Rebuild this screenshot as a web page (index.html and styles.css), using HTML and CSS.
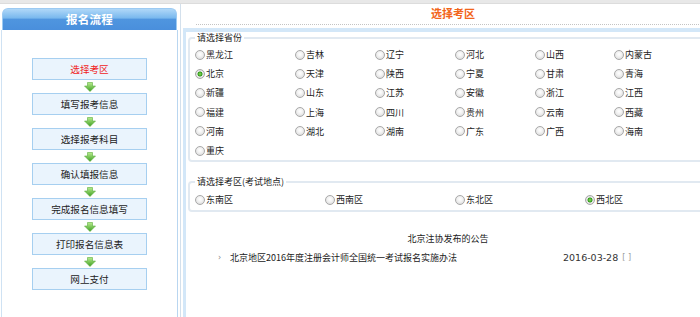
FILE: index.html
```html
<!DOCTYPE html>
<html lang="zh-CN">
<head>
<meta charset="utf-8">
<title>选择考区</title>
<link rel="stylesheet" href="styles.css">
</head>
<body>
<div class="topbar"></div>
<div class="page">
  <aside class="sidebar">
    <div class="side-head">报名流程</div>
    <div class="side-body">
      <div class="step current">选择考区</div>
      <div class="arrow"><svg width="12" height="10" viewBox="0 0 12 10"><defs><linearGradient id="ag" x1="0" y1="0" x2="0" y2="1"><stop offset="0" stop-color="#b8ec8e"/><stop offset="1" stop-color="#3d9e22"/></linearGradient></defs><path d="M3.5 0.5H8.5V4H11.5L6 9.5L0.5 4H3.5Z" fill="url(#ag)" stroke="#5cae3c" stroke-width="0.6"/></svg></div>
      <div class="step">填写报考信息</div>
      <div class="arrow"><svg width="12" height="10" viewBox="0 0 12 10"><path d="M3.5 0.5H8.5V4H11.5L6 9.5L0.5 4H3.5Z" fill="url(#ag)" stroke="#5cae3c" stroke-width="0.6"/></svg></div>
      <div class="step">选择报考科目</div>
      <div class="arrow"><svg width="12" height="10" viewBox="0 0 12 10"><path d="M3.5 0.5H8.5V4H11.5L6 9.5L0.5 4H3.5Z" fill="url(#ag)" stroke="#5cae3c" stroke-width="0.6"/></svg></div>
      <div class="step">确认填报信息</div>
      <div class="arrow"><svg width="12" height="10" viewBox="0 0 12 10"><path d="M3.5 0.5H8.5V4H11.5L6 9.5L0.5 4H3.5Z" fill="url(#ag)" stroke="#5cae3c" stroke-width="0.6"/></svg></div>
      <div class="step">完成报名信息填写</div>
      <div class="arrow"><svg width="12" height="10" viewBox="0 0 12 10"><path d="M3.5 0.5H8.5V4H11.5L6 9.5L0.5 4H3.5Z" fill="url(#ag)" stroke="#5cae3c" stroke-width="0.6"/></svg></div>
      <div class="step">打印报名信息表</div>
      <div class="arrow"><svg width="12" height="10" viewBox="0 0 12 10"><path d="M3.5 0.5H8.5V4H11.5L6 9.5L0.5 4H3.5Z" fill="url(#ag)" stroke="#5cae3c" stroke-width="0.6"/></svg></div>
      <div class="step">网上支付</div>
    </div>
  </aside>
  <main class="panel">
    <div class="panel-title"><span>选择考区</span></div>
    <div class="box">
      <fieldset class="group">
        <legend>请选择省份</legend>
        <div class="grid prov">
          <label><input type="radio" name="p">黑龙江</label>
          <label><input type="radio" name="p">吉林</label>
          <label><input type="radio" name="p">辽宁</label>
          <label><input type="radio" name="p">河北</label>
          <label><input type="radio" name="p">山西</label>
          <label><input type="radio" name="p">内蒙古</label>
          <label><input type="radio" name="p" checked>北京</label>
          <label><input type="radio" name="p">天津</label>
          <label><input type="radio" name="p">陕西</label>
          <label><input type="radio" name="p">宁夏</label>
          <label><input type="radio" name="p">甘肃</label>
          <label><input type="radio" name="p">青海</label>
          <label><input type="radio" name="p">新疆</label>
          <label><input type="radio" name="p">山东</label>
          <label><input type="radio" name="p">江苏</label>
          <label><input type="radio" name="p">安徽</label>
          <label><input type="radio" name="p">浙江</label>
          <label><input type="radio" name="p">江西</label>
          <label><input type="radio" name="p">福建</label>
          <label><input type="radio" name="p">上海</label>
          <label><input type="radio" name="p">四川</label>
          <label><input type="radio" name="p">贵州</label>
          <label><input type="radio" name="p">云南</label>
          <label><input type="radio" name="p">西藏</label>
          <label><input type="radio" name="p">河南</label>
          <label><input type="radio" name="p">湖北</label>
          <label><input type="radio" name="p">湖南</label>
          <label><input type="radio" name="p">广东</label>
          <label><input type="radio" name="p">广西</label>
          <label><input type="radio" name="p">海南</label>
          <label><input type="radio" name="p">重庆</label>
        </div>
      </fieldset>
      <fieldset class="group zones">
        <legend>请选择考区(考试地点)</legend>
        <div class="grid zone">
          <label><input type="radio" name="z">东南区</label>
          <label><input type="radio" name="z">西南区</label>
          <label><input type="radio" name="z">东北区</label>
          <label><input type="radio" name="z" checked>西北区</label>
        </div>
      </fieldset>
      <div class="notice">
        <div class="notice-head">北京注协发布的公告</div>
        <div class="notice-row">
          <span class="bullet">›</span>
          <span class="n-title">北京地区2016年度注册会计师全国统一考试报名实施办法</span>
          <span class="n-date">2016-03-28</span>
          <span class="n-br">[ ]</span>
        </div>
      </div>
    </div>
  </main>
</div>
</body>
</html>
```
FILE: styles.css
```css
html, body {
  margin: 0;
  padding: 0;
  overflow: hidden;
  background: #fff;
}
body {
  font-family: "Noto Sans CJK SC", "Noto Sans", sans-serif;
  font-size: 9px;
  color: #222;
  height: 100vh;
}
.topbar {
  height: 3px;
  background: #e8e8e8;
  border-bottom: 1px solid #dcdcdc;
}
.page {
  display: flex;
  height: calc(100vh - 4px);
  overflow: hidden;
}
.sidebar {
  width: 178px;
  flex: none;
  display: flex;
  flex-direction: column;
}
.side-head {
  margin: 4px 0 0 2px;
  width: 175px;
  height: 22px;
  box-sizing: border-box;
  border-radius: 6px 6px 0 0;
  border: 1px solid #9ccaf2;
  border-bottom: none;
  background: linear-gradient(#b0d8f8 0%, #7ab9ee 42%, #4f95df 50%, #4a8fdc 100%);
  color: #fff;
  font-weight: bold;
  font-size: 11.5px;
  line-height: 21px;
  text-align: center;
  letter-spacing: 0.3px;
}
.side-body {
  flex: 1;
  margin-left: 1px;
  width: 177px;
  box-sizing: border-box;
  border-left: 1px solid #cfe2f3;
  border-right: 1px solid #b9d6f0;
  padding-top: 28px;
  display: flex;
  flex-direction: column;
  align-items: center;
}
.step {
  width: 115px;
  height: 22px;
  box-sizing: border-box;
  border: 1px solid #a6cff0;
  background: #eaf4fd;
  font-size: 9.6px;
  line-height: 20px;
  text-align: center;
  color: #222;
}
.step.current {
  color: #f01c1c;
}
.arrow {
  height: 13px;
  display: flex;
  justify-content: center;
  padding-top: 2px;
  box-sizing: border-box;
}
.arrow svg {
  display: block;
}
.panel {
  margin-left: 2px;
  width: 536px;
  flex: none;
  border-left: 1px solid #d3e0ec;
  display: flex;
  flex-direction: column;
}
.panel-title {
  margin-left: 15px;
  padding-right: 7px;
  height: 20px;
  flex: none;
  border-bottom: 1px dotted #c4c4c4;
  text-align: center;
  color: #f2651a;
  font-size: 11px;
  font-weight: bold;
  line-height: 18px;
}
.box {
  flex: 1;
  margin: 3px 0 0 2px;
  border-top: 4px solid #d3e7f8;
  border-left: 3px solid #d3e7f8;
}
.group {
  margin: 0 5px 0 2px;
  border: 2px solid #e1e9f1;
  border-radius: 4px;
  padding: 2px 0 0 5px;
}
.group legend {
  padding: 0 2px;
  line-height: 11px;
  font-size: 9px;
  color: #222;
}
.zones {
  margin-top: 14px;
  padding-top: 3px;
  padding-bottom: 1px;
}
.grid {
  display: grid;
  grid-auto-rows: 19.2px;
}
.prov {
  grid-template-columns: 100px 80px 80px 80px 79px 80px;
}
.zone {
  grid-template-columns: 130px 130px 130px 130px;
}
.grid label {
  display: flex;
  align-items: center;
  white-space: nowrap;
}
.grid input {
  appearance: none;
  -webkit-appearance: none;
  width: 10px;
  height: 10px;
  margin: 0 1px 0 0;
  box-sizing: border-box;
  border: 1px solid #a8a8a8;
  border-radius: 50%;
  background: radial-gradient(circle at 50% 40%, #ffffff 0%, #f2f2f2 40%, #d4d4d4 100%);
}
.grid input:checked {
  background: radial-gradient(circle, #8fdc5a 0, #2f9a1c 2.2px, #e9e9e9 2.8px, #d4d4d4 100%);
}
.notice {
  padding-top: 21px;
}
.notice-head {
  text-align: center;
  padding-right: 7px;
  line-height: 12px;
  font-size: 9px;
}
.notice-row {
  margin: 7px 0 0 32px;
  display: flex;
  align-items: center;
  line-height: 12px;
}
.bullet {
  width: 12px;
  color: #888;
  font-family: "DejaVu Sans", sans-serif;
  font-size: 8px;
}
.n-title {
  width: 333px;
}
.n-date {
  font-family: "DejaVu Sans", sans-serif;
  font-size: 9.5px;
  color: #333;
}
.n-br {
  margin-left: 4px;
  color: #9a9a9a;
  font-family: "DejaVu Sans", sans-serif;
  font-size: 8px;
}
```
